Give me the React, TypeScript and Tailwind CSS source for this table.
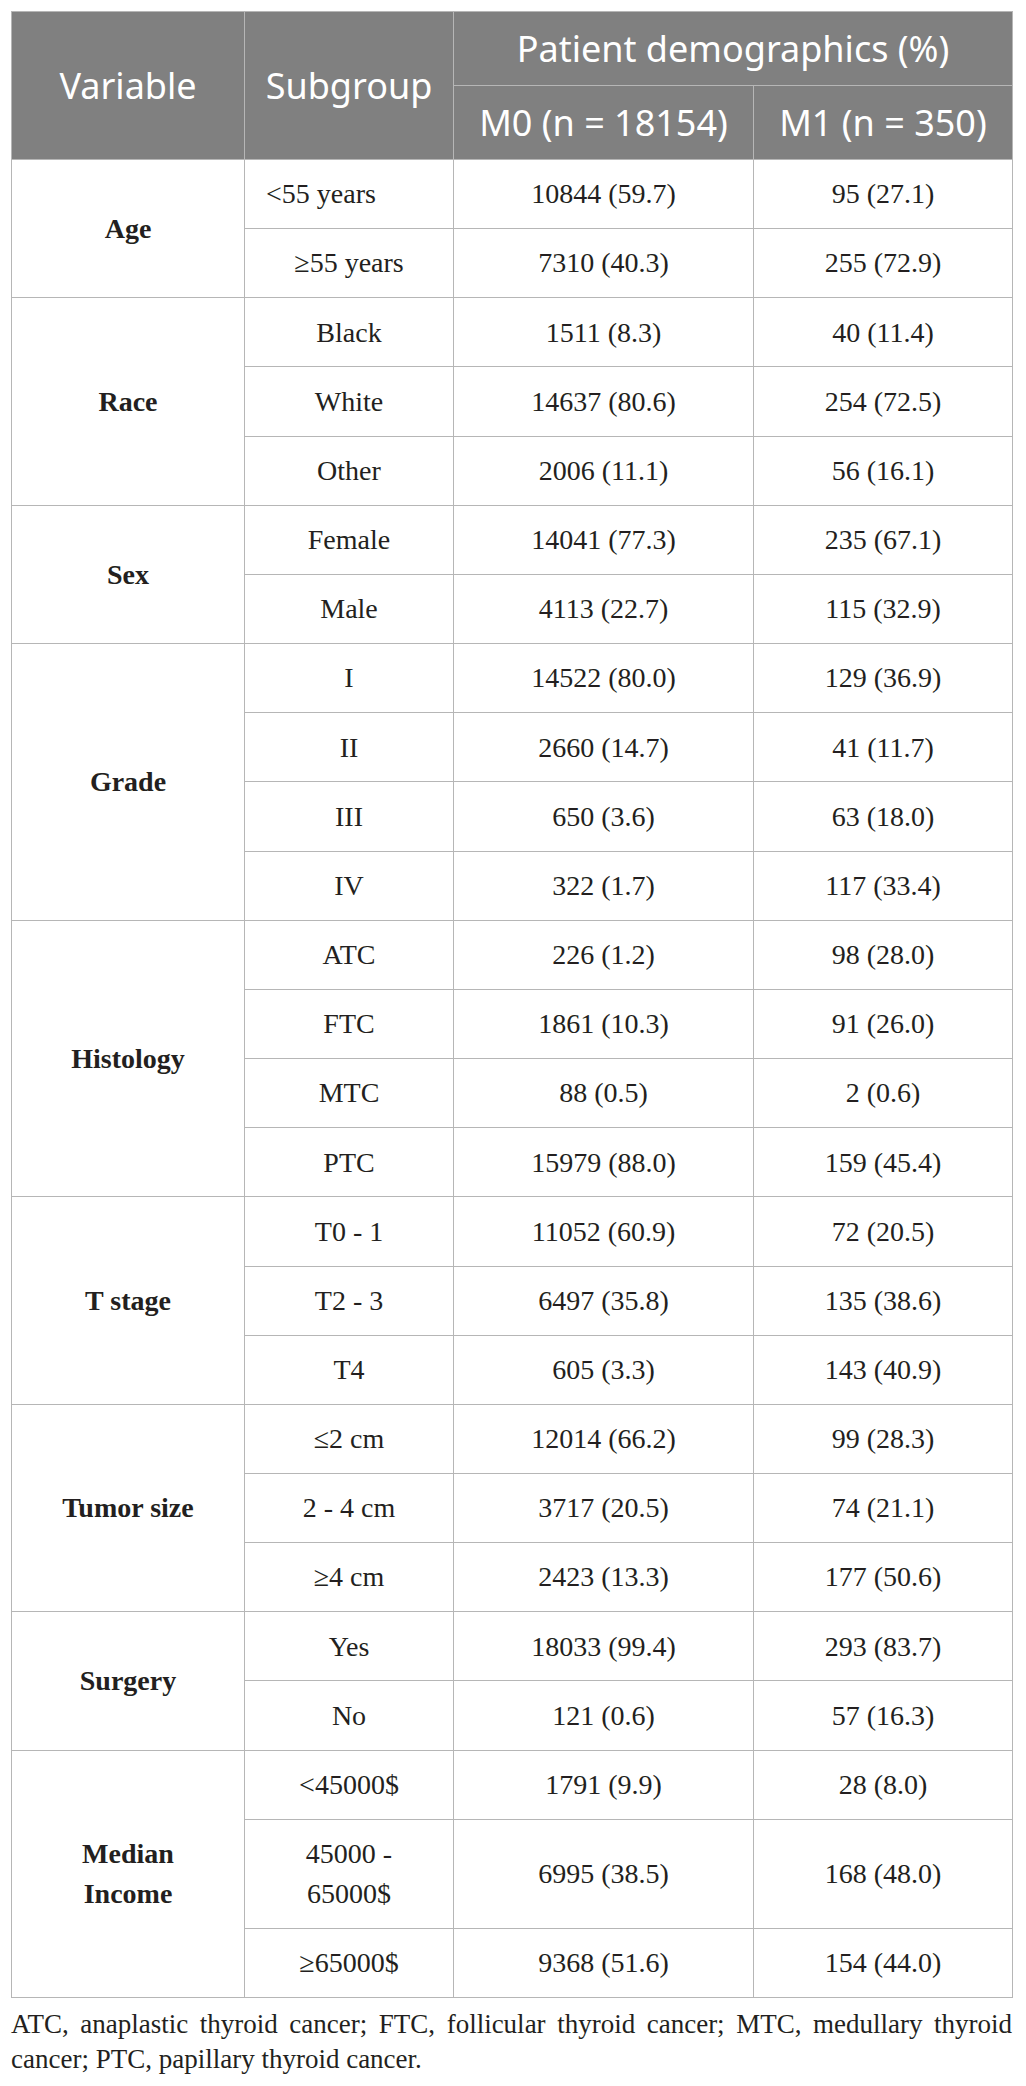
import React from "react";

type Row = { sub: React.ReactNode; m0: string; m1: string; left?: boolean; tall?: boolean };
type Group = { label: React.ReactNode; rows: Row[] };

const groups: Group[] = [
  {
    label: "Age",
    rows: [
      { sub: "<55 years", m0: "10844 (59.7)", m1: "95 (27.1)", left: true },
      { sub: "≥55 years", m0: "7310 (40.3)", m1: "255 (72.9)" },
    ],
  },
  {
    label: "Race",
    rows: [
      { sub: "Black", m0: "1511 (8.3)", m1: "40 (11.4)" },
      { sub: "White", m0: "14637 (80.6)", m1: "254 (72.5)" },
      { sub: "Other", m0: "2006 (11.1)", m1: "56 (16.1)" },
    ],
  },
  {
    label: "Sex",
    rows: [
      { sub: "Female", m0: "14041 (77.3)", m1: "235 (67.1)" },
      { sub: "Male", m0: "4113 (22.7)", m1: "115 (32.9)" },
    ],
  },
  {
    label: "Grade",
    rows: [
      { sub: "I", m0: "14522 (80.0)", m1: "129 (36.9)" },
      { sub: "II", m0: "2660 (14.7)", m1: "41 (11.7)" },
      { sub: "III", m0: "650 (3.6)", m1: "63 (18.0)" },
      { sub: "IV", m0: "322 (1.7)", m1: "117 (33.4)" },
    ],
  },
  {
    label: "Histology",
    rows: [
      { sub: "ATC", m0: "226 (1.2)", m1: "98 (28.0)" },
      { sub: "FTC", m0: "1861 (10.3)", m1: "91 (26.0)" },
      { sub: "MTC", m0: "88 (0.5)", m1: "2 (0.6)" },
      { sub: "PTC", m0: "15979 (88.0)", m1: "159 (45.4)" },
    ],
  },
  {
    label: "T stage",
    rows: [
      { sub: "T0 - 1", m0: "11052 (60.9)", m1: "72 (20.5)" },
      { sub: "T2 - 3", m0: "6497 (35.8)", m1: "135 (38.6)" },
      { sub: "T4", m0: "605 (3.3)", m1: "143 (40.9)" },
    ],
  },
  {
    label: "Tumor size",
    rows: [
      { sub: "≤2 cm", m0: "12014 (66.2)", m1: "99 (28.3)" },
      { sub: "2 - 4 cm", m0: "3717 (20.5)", m1: "74 (21.1)" },
      { sub: "≥4 cm", m0: "2423 (13.3)", m1: "177 (50.6)" },
    ],
  },
  {
    label: "Surgery",
    rows: [
      { sub: "Yes", m0: "18033 (99.4)", m1: "293 (83.7)" },
      { sub: "No", m0: "121 (0.6)", m1: "57 (16.3)" },
    ],
  },
  {
    label: (
      <>
        Median
        <br />
        Income
      </>
    ),
    rows: [
      { sub: "<45000$", m0: "1791 (9.9)", m1: "28 (8.0)" },
      {
        sub: (
          <>
            45000 -
            <br />
            65000$
          </>
        ),
        m0: "6995 (38.5)",
        m1: "168 (48.0)",
        tall: true,
      },
      { sub: "≥65000$", m0: "9368 (51.6)", m1: "154 (44.0)" },
    ],
  },
];

const cell = "border border-[#b6b6b6] align-middle p-0";

export default function App() {
  return (
    <div className="bg-white w-[1026px] min-h-[2086px] pt-[11px] pl-[11px] text-[#231f20]">
      <table
        className="table-fixed border-collapse w-[1001px]"
        style={{ fontFamily: '"Liberation Serif", "Times New Roman", serif' }}
      >
        <colgroup>
          <col className="w-[233px]" />
          <col className="w-[209px]" />
          <col className="w-[300px]" />
          <col className="w-[259px]" />
        </colgroup>
        <thead
          className="bg-[#808080] text-white text-[36px] font-normal"
          style={{ fontFamily: '"Noto Sans", "Open Sans", sans-serif' }}
        >
          <tr className="h-[74px]">
            <th rowSpan={2} className={`${cell} font-normal text-center leading-[44px]`}>
              Variable
            </th>
            <th rowSpan={2} className={`${cell} font-normal text-center leading-[44px]`}>
              Subgroup
            </th>
            <th colSpan={2} className={`${cell} font-normal text-center leading-[44px]`}>
              Patient demographics (%)
            </th>
          </tr>
          <tr className="h-[74px]">
            <th className={`${cell} font-normal text-center leading-[44px]`}>M0 (n = 18154)</th>
            <th className={`${cell} font-normal text-center leading-[44px]`}>M1 (n = 350)</th>
          </tr>
        </thead>
        <tbody className="text-[28px] leading-[39.5px]">
          {groups.map((g, gi) =>
            g.rows.map((r, ri) => (
              <tr key={`${gi}-${ri}`} className={r.tall ? "h-[109px]" : "h-[69.16px]"}>
                {ri === 0 && (
                  <td rowSpan={g.rows.length} className={`${cell} text-center font-bold`}>
                    {g.label}
                  </td>
                )}
                <td className={`${cell} ${r.left ? "text-left pl-[21px]" : "text-center"}`}>{r.sub}</td>
                <td className={`${cell} text-center`}>{r.m0}</td>
                <td className={`${cell} text-center`}>{r.m1}</td>
              </tr>
            ))
          )}
        </tbody>
      </table>
      <p
        className="w-[1001px] mt-[9px] text-[27px] leading-[35px] text-justify"
        style={{ fontFamily: '"Liberation Serif", "Times New Roman", serif' }}
      >
        ATC, anaplastic thyroid cancer; FTC, follicular thyroid cancer; MTC, medullary thyroid cancer; PTC,
        papillary thyroid cancer.
      </p>
    </div>
  );
}
